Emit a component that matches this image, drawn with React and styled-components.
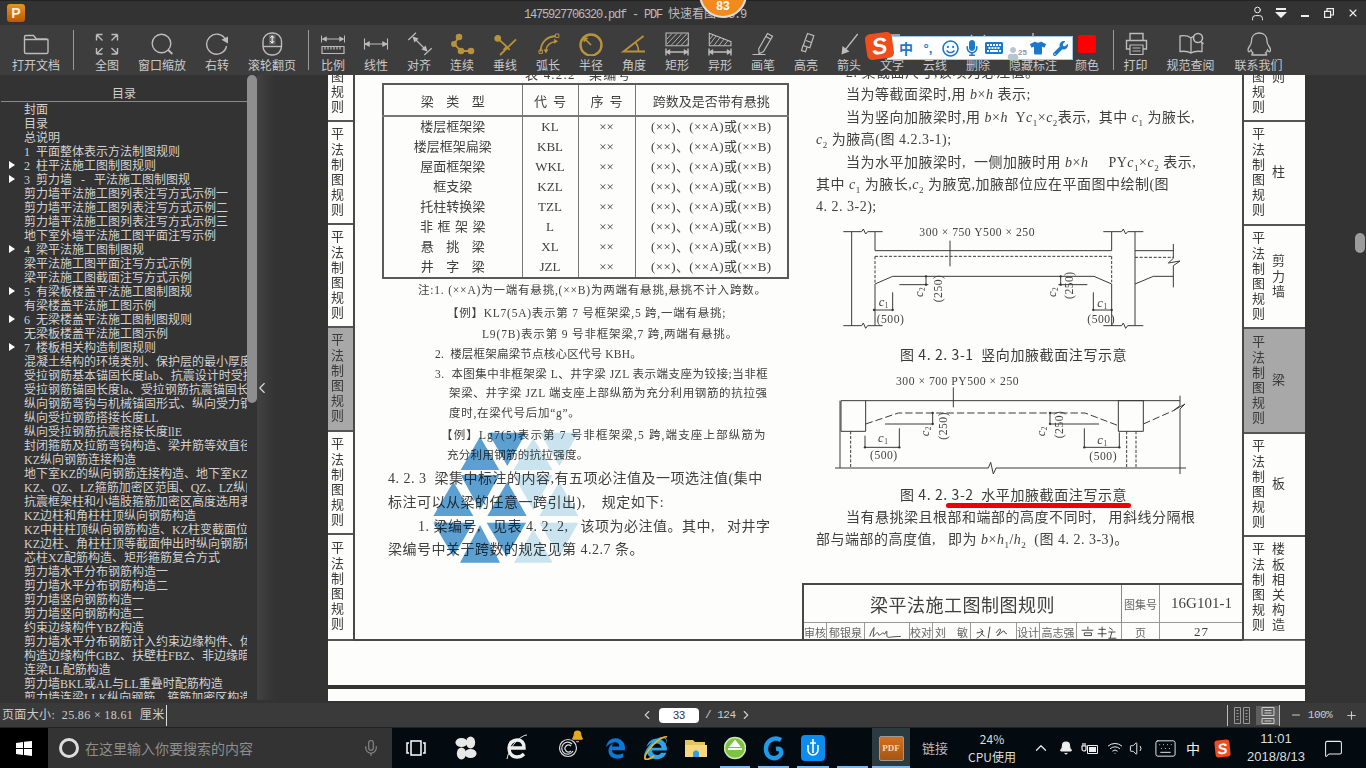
import React from 'react';
import styled, { createGlobalStyle } from 'styled-components';
import { FaEdgeLegacy, FaInternetExplorer, FaRegSmile, FaMicrophone, FaKeyboard, FaTshirt, FaWrench, FaUser } from 'react-icons/fa';
import { Bell, ChevronUp, Keyboard, Mic, MessageSquare, Volume1, Wifi, User, Minus, X, ChevronLeft, ChevronRight, Plus } from 'lucide-react';

const CJK = '"Noto Sans CJK SC", sans-serif';
const SERIF = '"Liberation Serif", "Noto Sans CJK SC", serif';

const GlobalStyle = createGlobalStyle`
  html, body { margin: 0; padding: 0; background: #333; overflow: hidden; }
  #root { width: 1366px; height: 768px; }
  * { box-sizing: border-box; }
`;

const dim = (
  <>
    <path d="M5 22h22M5 18.5v7M27 18.5v7" />
    <path d="M5.5 22l3-1.8v3.6zM26.5 22l-3-1.8v3.6z" fill="currentColor" />
  </>
);

const hatch = (
  <path strokeWidth=".9" d="M6 9l5-5.5M6 14l10-10.5M10 15.5l11-12M15 15.5l11-12M20 15.5l7-7.5M25 15.5l2-2" />
);

const icons = {
  folder: <path d="M4.5 22V7a1.5 1.5 0 0 1 1.5-1.5h7.5l3 3.5H26.5a1.5 1.5 0 0 1 1.5 1.5V22a1.5 1.5 0 0 1-1.5 1.5H6A1.5 1.5 0 0 1 4.5 22zM4.5 9.5h24" />,
  fit: <path d="M5.5 4.5h6M5.5 4.5v6M5.5 4.5l6 6M26.5 4.5h-6M26.5 4.5v6M26.5 4.5l-6 6M5.5 24h6M5.5 24v-6M5.5 24l6-6M26.5 24h-6M26.5 24v-6M26.5 24l-6-6" />,
  zoom: <><circle cx="15.5" cy="13.5" r="9.3" /><path d="M22.2 20l4.2 4" strokeWidth="1.8" /></>,
  rotate: <><path d="M24.5 9.5A10 10 0 1 0 25.5 16" /><path d="M20.5 9.8l6.5-3.3v7z" fill="currentColor" stroke="none" /></>,
  wheel: <><rect x="7" y="3" width="18.5" height="22" rx="8.5" /><path d="M7 16.5h18.5" /><path d="M13 4.5h6.5v10H13z" fill="#666" stroke="none" /><path d="M16.2 6v7M14.4 7.8l1.8-2 1.8 2M14.4 11.2l1.8 2 1.8-2" stroke="#fff" strokeWidth="1" /></>,
  ratio: <><path d="M6 9h20M4.5 5.5v7M27.5 5.5v7" strokeWidth="1" /><path d="M6 9l3-1.6v3.2zM26 9l-3-1.6v3.2z" fill="currentColor" /><path d="M5 16.5h22v7H5zM8 16.5v3M11 16.5v3M14 16.5v3M17 16.5v3M20 16.5v3M23 16.5v3" strokeWidth="1.2" /></>,
  linear: <><path d="M5 14h22M4.5 8.5v11M27.5 8.5v11" strokeWidth="1.1" /><path d="M5.5 14l3.5-1.8v3.6zM26.5 14l-3.5-1.8v3.6z" fill="currentColor" /></>,
  align: <><path d="M5.3 10L13 2.7M21.3 25l7.4-6.7M10.5 7.5l13 13" strokeWidth="1.2" /><path d="M10.5 7.5l3.8 1.2-2.6 2.6zM23.5 20.5l-3.8-1.2 2.6-2.6z" fill="currentColor" /></>,
  chain: <><path d="M13 7L8 14l7 7h10" strokeWidth="1.8" /><circle cx="13" cy="7" r="2.6" fill="currentColor" /><circle cx="8" cy="14" r="2.2" fill="currentColor" /><circle cx="15" cy="21" r="2.6" fill="currentColor" /><circle cx="25" cy="21" r="2.6" fill="currentColor" /></>,
  perp: <><path d="M8.7 8.3l9 8.4M27 9.3L11 25M14.5 20l3-3.2 3.2 3" strokeWidth="1.8" /><circle cx="8.7" cy="8.3" r="2.7" fill="currentColor" /></>,
  arc: <><path d="M8.7 21.5C8.7 12 15 6.5 24 6" strokeWidth="1.8" /><path d="M7 20h3.4v3.4H7zM23.5 4h3.4v3.4h-3.4z" strokeWidth="1" /><path d="M14 21c0-5 3.5-8.5 10-9.5" strokeWidth="1.4" /><path d="M14 23.5l-2.5-4 5-.2zM26 11.3l-4-2.5.3 5z" fill="currentColor" stroke="none" /></>,
  radius: <><circle cx="16" cy="15" r="10.5" strokeWidth="2.4" /><path d="M16 15L9 8" strokeWidth="1.7" /><path d="M7.5 6.5l6 1.4-4.6 4.6z" fill="currentColor" stroke="none" /></>,
  angle: <><path d="M25.5 6L5.5 21.5H27" strokeWidth="1.9" /><path d="M17.5 12.5c2 2.4 3 5.5 3 9" strokeWidth="1.6" /></>,
  rect: <><path d="M5 3h22.3v12.7H5z" strokeWidth="1.1" />{hatch}{dim}</>,
  shape: <><path d="M5.3 3.3L27 11.7v4H5.3z" strokeWidth="1.1" /><path strokeWidth=".9" d="M6 9l3-4M6 14l6-8M10 15.5l6-8M15 15.5l5-6.5M20 15.5l4-5" />{dim}</>,
  pen: <><path d="M20.5 3.5l5 2.8-9 15.2-4.4 2.3-.4-5z" strokeWidth="1.2" /><path d="M18.8 6.5l5 2.8M5.5 24.5h13" strokeWidth="1.2" /></>,
  marker: <><path d="M17.5 3.5l6.3 2.2-2.3 7-1.7 5-6.5-2.2 1.7-5zM16 10.500l6 2.2M13 15.500l-1.500 5 4 1.300 1.500-4.500" strokeWidth="1.2" /></>,
  arrow: <><path d="M24.7 4L12.500 19.500" strokeWidth="1.3" /><path d="M8.500 24.500l1-8.500 7 5.500z" fill="currentColor" stroke="none" /></>,
  text: <path d="M8 5h16M16 5v18" />,
  cloud: <path d="M6 20c-4-3-1-8 2-7 0-5 6-6 8-3 3-3 8-1 7 3 4 0 4 6 1 7z" />,
  trash: <path d="M9 5l14 16M23 5L9 21" />,
  hide: <path d="M16 3v4M7 9h18M10 9v12h12V9" />,
  color: <rect x="7" y="5" width="18" height="18" rx="2" fill="#ff0000" stroke="none" />,
  printer: <><path d="M10 10V3.500h13V10M10 19H6.500V10.500h20V19H23" /><path d="M10 15h13v9.500H10zM12.500 18h8M12.500 21h8" strokeWidth="1.2" /></>,
  book: <><path d="M16 23c-3-2-7-2-11-1.500V6c3-.5 8-.5 11 2 1-1 2-1.500 3-2M16 8v15c3-2 7-2 11-1.500V13" strokeWidth="1.3" /><circle cx="23" cy="8" r="4.500" strokeWidth="1.600" /><path d="M26 11.500l2.500 2.500" strokeWidth="1.600" /></>,
  qq: <path d="M16 3c-5 0-7.500 3.500-7.500 8 0 2-.5 3-1.500 4.500-1.500 2-2.500 4.500-1.500 6 .7.700 1.700-.3 2.500-1.500.5 1.500 1.200 2.500 2 3-1 .5-1.500 1.500-1 2h14.500c.5-.5 0-1.500-1-2 .8-.5 1.500-1.500 2-3 .8 1.200 1.800 2.200 2.500 1.500 1-1.500 0-4-1.500-6-1-1.500-1.500-2.500-1.500-4.500 0-4.500-2.500-8-7.500-8z" strokeWidth="1.300" />,
};

const tools = [
  { label: '打开文档', w: 60, icon: 'folder' },
  { sep: true, ml: 7, mr: 5.5 },
  { label: '全图', w: 55, icon: 'fit' },
  { label: '窗口缩放', w: 55, icon: 'zoom' },
  { label: '右转', w: 55, icon: 'rotate' },
  { label: '滚轮翻页', w: 55, icon: 'wheel' },
  { sep: true, ml: 8.5, mr: 2.5 },
  { label: '比例', w: 43, icon: 'ratio' },
  { label: '线性', w: 43, icon: 'linear' },
  { label: '对齐', w: 43, icon: 'align' },
  { label: '连续', w: 43, icon: 'chain', gold: true },
  { label: '垂线', w: 43, icon: 'perp', gold: true },
  { label: '弧长', w: 43, icon: 'arc', gold: true },
  { label: '半径', w: 43, icon: 'radius', gold: true },
  { label: '角度', w: 43, icon: 'angle', gold: true },
  { label: '矩形', w: 43, icon: 'rect' },
  { label: '异形', w: 43, icon: 'shape' },
  { label: '画笔', w: 43, icon: 'pen' },
  { label: '高亮', w: 43, icon: 'marker' },
  { label: '箭头', w: 43, icon: 'arrow' },
  { label: '文字', w: 43, icon: 'text' },
  { label: '云线', w: 43, icon: 'cloud' },
  { label: '删除', w: 43, icon: 'trash' },
  { label: '隐藏标注', w: 67, icon: 'hide' },
  { label: '颜色', w: 41, icon: 'color' },
  { sep: true, ml: 5, mr: 0 },
  { label: '打印', w: 44, icon: 'printer' },
  { label: '规范查阅', w: 66, icon: 'book' },
  { label: '联系我们', w: 70, icon: 'qq' },
];

const tocItems = [
  ['封面'], ['目录'], ['总说明'], ['1  平面整体表示方法制图规则'],
  ['2  柱平法施工图制图规则', true], ['3  剪力墙   -   平法施工图制图规', true],
  ['剪力墙平法施工图列表注写方式示例一'], ['剪力墙平法施工图列表注写方式示例二'], ['剪力墙平法施工图列表注写方式示例三'],
  ['地下室外墙平法施工图平面注写示例'], ['4  梁平法施工图制图规', true],
  ['梁平法施工图平面注写方式示例'], ['梁平法施工图截面注写方式示例'],
  ['5  有梁板楼盖平法施工图制图规', true], ['有梁楼盖平法施工图示例'],
  ['6  无梁楼盖平法施工图制图规则', true], ['无梁板楼盖平法施工图示例'],
  ['7  楼板相关构造制图规则', true],
  ['混凝土结构的环境类别、保护层的最小厚度'], ['受拉钢筋基本锚固长度lab、抗震设计时受拉钢筋'],
  ['受拉钢筋锚固长度la、受拉钢筋抗震锚固长度'], ['纵向钢筋弯钩与机械锚固形式、纵向受力钢筋'],
  ['纵向受拉钢筋搭接长度LL'], ['纵向受拉钢筋抗震搭接长度llE'],
  ['封闭箍筋及拉筋弯钩构造、梁并筋等效直径'], ['KZ纵向钢筋连接构造'],
  ['地下室KZ的纵向钢筋连接构造、地下室KZ的'], ['KZ、QZ、LZ箍筋加密区范围、QZ、LZ纵向钢筋'],
  ['抗震框架柱和小墙肢箍筋加密区高度选用表'], ['KZ边柱和角柱柱顶纵向钢筋构造'],
  ['KZ中柱柱顶纵向钢筋构造、KZ柱变截面位置'], ['KZ边柱、角柱柱顶等截面伸出时纵向钢筋构造'],
  ['芯柱XZ配筋构造、矩形箍筋复合方式'], ['剪力墙水平分布钢筋构造一'], ['剪力墙水平分布钢筋构造二'],
  ['剪力墙竖向钢筋构造一'], ['剪力墙竖向钢筋构造二'], ['约束边缘构件YBZ构造'],
  ['剪力墙水平分布钢筋计入约束边缘构件、体积'], ['构造边缘构件GBZ、扶壁柱FBZ、非边缘暗柱'],
  ['连梁LL配筋构造'], ['剪力墙BKL或AL与LL重叠时配筋构造'], ['剪力墙连梁LLK纵向钢筋、箍筋加密区构造'],
];

const beams = [
  ['楼层框架梁', 0, 'KL'], ['楼层框架扁梁', 0, 'KBL'], ['屋面框架梁', 0, 'WKL'], ['框支梁', 0, 'KZL'],
  ['托柱转换梁', 0, 'TZL'], ['非框架梁', 4.5, 'L'], ['悬挑梁', 12.5, 'XL'], ['井字梁', 12.5, 'JZL'],
];

const notes = [
  { t: '注:1. (××A)为一端有悬挑,(××B)为两端有悬挑,悬挑不计入跨数。', x: 63, gap: 1, ls: 0.8 },
  { t: '【例】KL7(5A)表示第 7 号框架梁,5 跨,一端有悬挑;', x: 92, gap: 3, ls: 0.75 },
  { t: 'L9(7B)表示第 9 号非框架梁,7 跨,两端有悬挑。', x: 127, gap: 1, ls: 0.85 },
  { t: '2.  楼层框架扁梁节点核心区代号 KBH。', x: 80, gap: 0, ls: 0.2 },
  { t: '3.  本图集中非框架梁 L、井字梁 JZL 表示端支座为铰接;当非框', x: 80, gap: 0, ls: 0.5 },
  { t: '架梁、井字梁 JZL 端支座上部纵筋为充分利用钢筋的抗拉强', x: 94, gap: -1, ls: 0.65 },
  { t: '度时,在梁代号后加“g”。', x: 94, gap: 0, ls: 0.7 },
  { t: '【例】Lg7(5)表示第 7 号非框架梁,5 跨,端支座上部纵筋为', x: 86, gap: 2, ls: 1.15 },
  { t: '充分利用钢筋的抗拉强度。', x: 92, gap: 0, ls: 0.3 },
];

const leftTabs = [{ h: 103 }, { h: 103 }, { h: 103 }, { h: 104, on: true }, { h: 103 }, { h: 106 }];
const rightTabs = [
  { h: 103, side: '总则' }, { h: 104, side: '柱' }, { h: 103, side: '剪力墙' },
  { h: 105, side: '梁', on: true }, { h: 103, side: '板' }, { h: 104, side: '楼板相关构造' },
];

const taskIcons = [
  { w: 48, node: <svg width="20" height="18" viewBox="0 0 20 18" fill="none" stroke="#fff" strokeWidth="1.500"><path d="M5 2h10v14H5zM3 4H1v10h2M17 4h2v10h-2" /></svg> },
  { w: 52, node: <svg width="22" height="24" viewBox="0 0 24 26" fill="#e8e8e8"><ellipse cx="7" cy="7" rx="6.500" ry="5" /><ellipse cx="17" cy="7" rx="5" ry="6.500" /><ellipse cx="7" cy="19" rx="5" ry="6.500" /><ellipse cx="17" cy="19" rx="6.500" ry="5" /><circle cx="12" cy="13" r="1.500" fill="#05101a" /></svg> },
  { w: 50, node: <svg width="24" height="28" viewBox="0 0 24 28" fill="none" stroke="#eee"><path d="M4 14h15c0-6-3-8-7-8s-8 3-8 8 3 9 8 9c3 0 5-1 7-3" strokeWidth="3.400" /><path d="M22 1C17 1 5 10 2 25" strokeWidth="1" /></svg> },
  { w: 52, node: <GSwirl /> },
  { w: 42, node: <FaEdgeLegacy size={21} color="#0a78d4" /> },
  { w: 39, node: <IeIcon /> },
  { w: 41, node: <FolderIcon /> },
  { w: 38, line: true, node: <svg width="22" height="26" viewBox="0 0 22 26"><circle cx="11" cy="13" r="10.500" fill="#7dc242" stroke="#cfe8b8" strokeWidth="1.500" /><path d="M4 14h14M11 6l-4 5h8z" stroke="#fff" strokeWidth="1.800" fill="#fff" /></svg> },
  { w: 39, line: true, node: <svg width="24" height="26" viewBox="0 0 24 26" fill="none"><path d="M19 5C12 1 4 6 4 14s7 11 12 8 4-9-2-8" stroke="#1e9be8" strokeWidth="4.500" /></svg> },
  { w: 40, line: true, node: <svg width="24" height="26" viewBox="0 0 24 26" fill="none"><rect width="24" height="26" rx="4" fill="#0d8cf0" /><path d="M12 4v14M7 10v5a5 5 0 0 0 10 0v-5M9 8h6" stroke="#fff" strokeWidth="1.600" /></svg> },
  { w: 39, line: true, node: null },
];

function GSwirl() {
  return (
    <BellWrap>
      <svg width="20" height="20" viewBox="0 0 20 20" fill="none" stroke="#ddd" strokeWidth="1.200"><circle cx="10" cy="10" r="8.500" /><path d="M14 6a6 6 0 1 0 1 7M13 8a3.500 3.500 0 1 0 0 5" /></svg>
      <BellBadge><Bell size={13} color="#e8a81c" fill="#e8a81c" /></BellBadge>
    </BellWrap>
  );
}

function IeIcon() {
  return (
    <BellWrap>
      <FaInternetExplorer size={23} color="#2ea3e8" />
      <BellBadge $ring><svg width="24" height="24" viewBox="0 0 24 24" fill="none" stroke="#f2b21c" strokeWidth="1.600"><path d="M23 1c-2-1-9 2-15 9S0 21 1 23c1 1 5 0 9-3" /></svg></BellBadge>
    </BellWrap>
  );
}

function FolderIcon() {
  return (
    <svg width="22" height="20" viewBox="0 0 22 20"><path d="M0 2h8l2 2h10v15H0z" fill="#e8c25e" /><path d="M0 7h22v12H0z" fill="#f6d97e" /><path d="M8 19v-5l3-2 3 2v5z" fill="#3a9be0" /></svg>
  );
}

const CSub = ({ x, y, n }) => (
  <DiagramText x={x} y={y}>
    <tspan fontStyle="italic" fontSize="38">c</tspan>
    <tspan fontSize="22" dy="6">{n}</tspan>
  </DiagramText>
);

const CRot = ({ x, y, n }) => (
  <DiagramText transform={`translate(${x} ${y}) rotate(-90)`}>
    <tspan fontStyle="italic" fontSize="38">c</tspan>
    <tspan fontSize="22" dy="6">{n}</tspan>
  </DiagramText>
);

const App = () => (
  <>
    <GlobalStyle />
    <Shell>
      <TitleBar>
        <AppLogo>P</AppLogo>
        <DocTitle>1475927706320.pdf - PDF <Wide>快速看图</Wide> V3.9</DocTitle>
        <Badge>83</Badge>
        <WindowControls>
          <WinBtn $w={24}><User size={17} strokeWidth={1.400} /></WinBtn>
          <WinBtn $w={24}>
            <svg width="12" height="11" viewBox="0 0 12 11" fill="#eee"><path d="M1 0h10v2H1zM0 4h12l-6 6z" /></svg>
          </WinBtn>
          <WinBtn $w={24}><svg width="8" height="8" viewBox="0 0 8 8" fill="#eee"><path d="M0 6h8v2H0z" /></svg></WinBtn>
          <WinBtn $w={24}><svg width="10" height="10" viewBox="0 0 10 10" fill="none" stroke="#eee" strokeWidth="1.200"><path d="M.6 3.400h6v6h-6zM3 3V.6h6.400V7H7" /></svg></WinBtn>
          <WinBtn $w={24}><X size={12} strokeWidth={2.200} /></WinBtn>
        </WindowControls>
      </TitleBar>

      <Toolbar>
        {tools.map((tool, i) =>
          tool.sep ? (
            <ToolSep key={i} $ml={tool.ml} $mr={tool.mr} />
          ) : (
            <Tool key={tool.label} $w={tool.w}>
              <ToolIcon viewBox="0 0 32 26" $gold={tool.gold}>{icons[tool.icon]}</ToolIcon>
              <ToolLabel>{tool.label}</ToolLabel>
            </Tool>
          )
        )}
        <SogouLogo>S</SogouLogo>
        <SogouBar>
          <SogouSlot><SogouZh>中</SogouZh></SogouSlot>
          <SogouSlot><SogouDots>°,</SogouDots></SogouSlot>
          <SogouSlot><FaRegSmile size={17} /></SogouSlot>
          <SogouSlot><FaMicrophone size={16} /></SogouSlot>
          <SogouSlot><FaKeyboard size={18} /></SogouSlot>
          <SogouSlot><SogouSkin><FaUser size={12} /><SkinNum>25</SkinNum></SogouSkin></SogouSlot>
          <SogouSlot><FaTshirt size={16} /></SogouSlot>
          <SogouSlot><FaWrench size={15} /></SogouSlot>
        </SogouBar>
      </Toolbar>

      <Viewer>
        <Sidebar>
          <TocPane>
            <TocHead>目录</TocHead>
            <TocList>
              {tocItems.map(([text, caret]) => (
                <TocRow key={text} $caret={caret}>{text}</TocRow>
              ))}
            </TocList>
          </TocPane>
          <TocScroll><TocThumb /></TocScroll>
        </Sidebar>
        <Splitter><ChevronLeft size={18} color="#ddd" strokeWidth={1.500} /></Splitter>

        <DocArea>
          <Sheet>
            <TabsLeft>
              {leftTabs.map((tab, i) => (
                <TabL key={i} $h={tab.h} $on={tab.on}><TabText>平法制图规则</TabText></TabL>
              ))}
            </TabsLeft>

            <SheetMain>
              <LeftCol>
                <TableTitle>表 4.2.2   梁编号</TableTitle>
                <BeamTable>
                  <thead>
                    <tr>
                      <HeadCell $w={139} $sp={12.500}>梁类型</HeadCell>
                      <HeadCell $w={56} $sp={6}>代号</HeadCell>
                      <HeadCell $w={57} $sp={6}>序号</HeadCell>
                      <HeadCell $w={153}>跨数及是否带有悬挑</HeadCell>
                    </tr>
                  </thead>
                  <tbody>
                    {beams.map(([name, sp, code]) => (
                      <tr key={code}>
                        <Cell $sp={sp}>{name}</Cell>
                        <Cell>{code}</Cell>
                        <Cell>××</Cell>
                        <Cell $sp={0.4} $flat>(××)、(××A)或(××B)</Cell>
                      </tr>
                    ))}
                  </tbody>
                </BeamTable>
                {notes.map(note => (
                  <NoteLine key={note.t} $x={note.x} $gap={note.gap} $ls={note.ls}>{note.t}</NoteLine>
                ))}
                <BodyLine $x={33} $top={2}>4. 2. 3  梁集中标注的内容,有五项必注值及一项选注值(集中</BodyLine>
                <BodyLine $x={33} $top={1}>标注可以从梁的任意一跨引出),    规定如下:</BodyLine>
                <BodyLine $x={63} $top={1}>1. 梁编号,   见表 4. 2. 2,   该项为必注值。其中,   对井字</BodyLine>
                <BodyLine $x={33} $top={0}>梁编号中关于跨数的规定见第 4.2.7 条。</BodyLine>
                <Watermark viewBox="0 0 1260 600">
                  <g fill="#2f86c9" fillOpacity=".78">
                    <path d="M330 80L272 180H388zM355 68H468L412 168zM272 195H388L330 300zM250 215L190 318H310zM412 215L352 318H470zM190 338H310L250 440zM350 338H468L410 440zM330 345L270 458H390z" />
                  </g>
                  <g fill="#a9d5ea" fillOpacity=".6">
                    <path d="M490 85L430 180H548zM510 68H625L568 168zM430 195H548L490 300zM568 215L508 318H625zM508 338H625L568 440zM490 358L432 458H548z" />
                  </g>
                </Watermark>
              </LeftCol>

              <RightCol>
                <TextLine $x={46} $first>2. 梁截面尺寸,该项为必注值。</TextLine>
                <TextLine $x={46}>当为等截面梁时,用 <Var>b</Var>×<Var>h</Var> 表示;</TextLine>
                <TextLine $x={46}>当为竖向加腋梁时,用 <Var>b</Var>×<Var>h</Var>  Y<Var>c</Var><sub>1</sub>×<Var>c</Var><sub>2</sub>表示,  其中 <Var>c</Var><sub>1</sub> 为腋长,</TextLine>
                <TextLine $x={16}><Var>c</Var><sub>2</sub> 为腋高(图 4.2.3-1);</TextLine>
                <TextLine $x={46}>当为水平加腋梁时,  一侧加腋时用 <Var>b</Var>×<Var>h</Var>     PY<Var>c</Var><sub>1</sub>×<Var>c</Var><sub>2</sub> 表示,</TextLine>
                <TextLine $x={16}>其中 <Var>c</Var><sub>1</sub> 为腋长,<Var>c</Var><sub>2</sub> 为腋宽,加腋部位应在平面图中绘制(图</TextLine>
                <TextLine $x={16}>4. 2. 3-2);</TextLine>

                <Diagram width="400" height="125" viewBox="0 0 1200 375">
                  <path d="M130 38H185L190 30L197 45L203 38H248M130 320H185L190 312L197 328L203 320H248M155 38V320M225 38V95M225 195V320M225 95H935M910 38H965L970 30L977 45L983 38H1030M910 320H965L970 312L977 328L983 320H1030M935 38V95M1005 38V320M935 195V320M225 195L278 172H882L935 195M450 65V142M1005 95H1120M1005 195L1060 172H1120M1120 75V118L1105 132L1140 126L1120 140V205M298 197H385M378 172V197M775 197H862M782 172V197M222 273H278M278 220V273M880 273H935M880 220V273" />
                  <path strokeDasharray="9 5" d="M225 112H935M225 112V195M935 112V190M1005 115H1120" />
                  <g fill="#333" stroke="none">
                    <circle cx="378" cy="172" r="3.500" /><circle cx="378" cy="197" r="3.500" /><circle cx="782" cy="172" r="3.500" /><circle cx="782" cy="197" r="3.500" />
                    <circle cx="222" cy="273" r="3.500" /><circle cx="278" cy="273" r="3.500" /><circle cx="880" cy="273" r="3.500" /><circle cx="935" cy="273" r="3.500" />
                  </g>
                  <DiagramText x="358" y="50">300 × 750  Y500 × 250</DiagramText>
                  <CSub x={236} y={262} n="1" />
                  <DiagramText x="230" y="312">(500)</DiagramText>
                  <CSub x={892} y={264} n="1" />
                  <DiagramText x="862" y="312">(500)</DiagramText>
                  <CRot x={368} y={234} n="2" />
                  <DiagramText transform="translate(426 250) rotate(-90)">(250)</DiagramText>
                  <CRot x={768} y={234} n="2" />
                  <DiagramText transform="translate(818 240) rotate(-90)">(250)</DiagramText>
                </Diagram>
                <Caption>图 4. 2. 3-1  竖向加腋截面注写示意</Caption>
                <Diagram $top={5} width="400" height="115" viewBox="0 450 1200 345">
                  <path d="M123 545H1140M123 545V637H197V545M955 545V637H1030V545M955 545H1030M120 545V747M1140 530V560L1120 575L1155 555L1140 570V765M460 505V565M255 615H400M398 582V615M750 582V615M750 615H897M195 685H298M195 650V685M298 628V685M853 685H958M853 628V685M958 640V685M105 747H565L572 730L580 765L588 747H1158" />
                  <path strokeDasharray="22 9" d="M197 615L295 582H855L955 620M1030 615L1120 575" />
                  <path strokeDasharray="9 5" d="M152 637V747M980 637V747M1008 637V747" />
                  <g fill="#333" stroke="none">
                    <circle cx="398" cy="582" r="3.500" /><circle cx="398" cy="615" r="3.500" /><circle cx="750" cy="582" r="3.500" /><circle cx="750" cy="615" r="3.500" />
                    <circle cx="195" cy="685" r="3.500" /><circle cx="298" cy="685" r="3.500" /><circle cx="853" cy="685" r="3.500" /><circle cx="958" cy="685" r="3.500" />
                  </g>
                  <DiagramText x="288" y="498">300 × 700  PY500 × 250</DiagramText>
                  <CSub x={234} y={670} n="1" />
                  <DiagramText x="210" y="720">(500)</DiagramText>
                  <CSub x={892} y={674} n="1" />
                  <DiagramText x="868" y="722">(500)</DiagramText>
                  <CRot x={386} y={652} n="2" />
                  <DiagramText transform="translate(440 662) rotate(-90)">(250)</DiagramText>
                  <CRot x={736} y={652} n="2" />
                  <DiagramText transform="translate(790 658) rotate(-90)">(250)</DiagramText>
                </Diagram>
                <Caption $mark>图 4. 2. 3-2  水平加腋截面注写示意<RedMark /></Caption>
                <TextLine $x={46} $top={1}>当有悬挑梁且根部和端部的高度不同时,   用斜线分隔根</TextLine>
                <TextLine $x={16}>部与端部的高度值,   即为 <Var>b</Var>×<Var>h</Var><sub>1</sub>/<Var>h</Var><sub>2</sub>  (图 4. 2. 3-3)。</TextLine>

                <TitleBlock>
                  <TitleMain>梁平法施工图制图规则</TitleMain>
                  <TitleCell $small $row>图集号</TitleCell>
                  <TitleCell $big>16G101-1</TitleCell>
                  <TitleCell $small>审核</TitleCell>
                  <TitleCell $small>郁银泉</TitleCell>
                  <TitleCell><Signature viewBox="0 0 45 18"><path d="M3 14c3-8 5-10 5-10s-1 8-1 10 3-5 5-4 0 4 3 2 3-3 4-1 2-3 3-3-1 7 2 7 6-1 14-1" /></Signature></TitleCell>
                  <TitleCell $small>校对</TitleCell>
                  <TitleCell $small>刘    敏</TitleCell>
                  <TitleCell><Signature viewBox="0 0 46 18"><path d="M8 5l3 3M4 10c4 0 6-2 7-2-1 4-4 7-7 8M9 10l4 4M19 3l-2 13M26 10c2-3 4-5 5-4 0 3-3 6-4 7 3-1 5-4 7-5s1 3 4 3" /></Signature></TitleCell>
                  <TitleCell $small>设计</TitleCell>
                  <TitleCell $small>高志强</TitleCell>
                  <TitleCell><Signature viewBox="0 0 45 18"><path d="M3 7h13M10 3v3M6 10h8v3H6zM22 6h8M26 3v12M21 11h10M34 4l4 3M33 9h8M37 9l-2 7M33 16h9" /></Signature></TitleCell>
                  <TitleCell $small>页</TitleCell>
                  <TitleCell $num>27</TitleCell>
                </TitleBlock>
              </RightCol>
            </SheetMain>

            <TabsRight>
              {rightTabs.map((tab, i) => (
                <TabR key={i} $h={tab.h} $on={tab.on}>
                  <TabText>平法制图规则</TabText>
                  <TabText>{tab.side}</TabText>
                </TabR>
              ))}
            </TabsRight>
          </Sheet>
          <NextSheet />
        </DocArea>

        <DocScroll><DocThumb /></DocScroll>
      </Viewer>

      <StatusBar>
        <PageSize>页面大小:  25.86 × 18.61  厘米</PageSize>
        <Pager>
          <ChevronLeft size={14} strokeWidth={2} />
          <PageInput>33</PageInput>
          <PageTotal>/ 124</PageTotal>
          <ChevronRight size={14} strokeWidth={2} />
        </Pager>
        <ViewModes>
          <ViewBtn>
            <svg width="16" height="17" viewBox="0 0 16 17" fill="none" stroke="#999"><path d="M.5.5h6v16h-6zM9.500.5h6v16h-6zM2.500 3.500h2M2.500 6.500h2M2.500 9.500h2M2.500 12.500h2M11.500 3.500h2M11.500 6.500h2M11.500 9.500h2M11.500 12.500h2" /></svg>
          </ViewBtn>
          <ViewBtn $on>
            <svg width="16" height="17" viewBox="0 0 16 17" fill="none" stroke="#ccc"><path d="M2 .5h12v8H2zM2 11.500h12v5H2zM4.500 3.500h7M4.500 6h7M4.500 14h7" /></svg>
          </ViewBtn>
        </ViewModes>
        <ZoomBox>
          <Minus size={12} />
          <ZoomValue>100%</ZoomValue>
          <Plus size={13} />
        </ZoomBox>
      </StatusBar>

      <Taskbar>
        <StartBtn>
          <svg width="16" height="15" viewBox="0 0 16 15" fill="#fff"><path d="M0 2l7-1v6H0zM8 .8L16 0v7H8zM0 8h7v6l-7-1zM8 8h8v7l-8-1z" /></svg>
        </StartBtn>
        <SearchBox>
          <CortanaRing />
          <SearchText>在这里输入你要搜索的内容</SearchText>
          <Mic size={18} color="#8a8a8a" strokeWidth={1.500} />
        </SearchBox>
        {taskIcons.map((item, i) => (
          <TaskBtn key={i} $w={item.w} $line={item.line}>{item.node}</TaskBtn>
        ))}
        <TaskBtn $w={38} $line $active>
          <PdfTile>PDF</PdfTile>
        </TaskBtn>
        <TrayLink>链接</TrayLink>
        <CpuBox>
          <span>24%</span>
          <span>CPU使用</span>
        </CpuBox>
        <TrayItem $w={34}><ChevronUp size={18} strokeWidth={1.600} /></TrayItem>
        <TrayItem $w={16}><Bell size={14} fill="#eee" /></TrayItem>
        <TrayItem $w={32}>
          <svg width="18" height="14" viewBox="0 0 18 14" fill="none" stroke="#eee"><path d="M6.500 4.500h10v8h-10z" /><path d="M8 6h7v5H8z" fill="#eee" stroke="none" /><path d="M1 5h4v3a2 2 0 0 1-4 0zM2 2v3M4 2v3" strokeWidth="1.200" /></svg>
        </TrayItem>
        <TrayItem $w={18}><Wifi size={16} strokeWidth={1.500} /></TrayItem>
        <TrayItem $w={26}><Volume1 size={17} strokeWidth={1.400} /></TrayItem>
        <TrayItem $w={30}><Keyboard size={23} strokeWidth={1} /></TrayItem>
        <TrayItem $w={26}>中</TrayItem>
        <TrayItem $w={32}><TraySogou>S</TraySogou></TrayItem>
        <ClockBox>
          <span>11:01</span>
          <span>2018/8/13</span>
        </ClockBox>
        <TrayItem $w={38}><MessageSquare size={19} strokeWidth={1.300} /></TrayItem>
      </Taskbar>
    </Shell>
  </>
);

export default App;

const Shell = styled.div`
  width: 1366px;
  height: 768px;
  display: flex;
  flex-direction: column;
  overflow: hidden;
  background: #333;
  font-family: ${CJK};
`;

const TitleBar = styled.div`
  position: relative;
  height: 25px;
  flex: none;
  display: flex;
  align-items: center;
  background: #333;
  border-top: 1px solid #222;
`;

const AppLogo = styled.div`
  width: 18px;
  height: 18px;
  margin-left: 7px;
  border-radius: 3px;
  background: linear-gradient(#e8902a, #b85a08);
  color: #fff0dc;
  font: bold 14px/18px "Liberation Sans", sans-serif;
  text-align: center;
`;

const DocTitle = styled.div`
  margin-left: 499px;
  color: #bbb;
  font: 12px "Liberation Mono", "Noto Sans CJK SC", monospace;
  letter-spacing: -1.2px;
  white-space: pre;
`;

const Wide = styled.span`
  letter-spacing: 0;
  font-family: ${CJK};
`;

const Badge = styled.div`
  position: absolute;
  left: 699px;
  top: -31px;
  width: 48px;
  height: 48px;
  padding-bottom: 3px;
  border-radius: 50%;
  border: 2px solid #ddd;
  background: #f28a1c;
  color: #fff;
  font: bold 12px "Liberation Sans", sans-serif;
  display: flex;
  align-items: flex-end;
  justify-content: center;
`;

const WindowControls = styled.div`
  margin-left: auto;
  display: flex;
  padding-right: 1px;
`;

const WinBtn = styled.div`
  width: ${p => p.$w}px;
  display: flex;
  align-items: center;
  justify-content: center;
  color: #eee;
`;

const Toolbar = styled.div`
  position: relative;
  height: 50px;
  flex: none;
  display: flex;
  padding-left: 6px;
  background: #3d3d3d;
`;

const Tool = styled.div`
  width: ${p => p.$w}px;
  flex: none;
  display: flex;
  flex-direction: column;
  align-items: center;
  padding-top: 5px;
`;

const ToolIcon = styled.svg`
  width: 32px;
  height: 26px;
  flex: none;
  fill: none;
  stroke: currentColor;
  stroke-width: 1.4;
  color: ${p => (p.$gold ? '#b8933c' : '#bcbcbc')};
`;

const ToolLabel = styled.div`
  margin-top: 1px;
  color: #cacaca;
  font-size: 12px;
  line-height: 16px;
  white-space: nowrap;
`;

const ToolSep = styled.div`
  width: 1px;
  flex: none;
  height: 40px;
  margin: 5px ${p => p.$mr}px 0 ${p => p.$ml}px;
  background: #9a9a9a;
`;

const SogouLogo = styled.div`
  position: absolute;
  left: 866px;
  top: 8px;
  z-index: 2;
  width: 27px;
  height: 26px;
  border-radius: 5px;
  transform: rotate(-8deg);
  background: #ee4d1c;
  color: #fff;
  font: italic bold 23px/26px "Liberation Sans", sans-serif;
  text-align: center;
`;

const SogouBar = styled.div`
  position: absolute;
  left: 887px;
  top: 11px;
  width: 186px;
  height: 24px;
  padding-left: 7px;
  display: flex;
  align-items: center;
  background: #fff;
  border: 1px solid #a9c9e2;
  color: #1b79c9;
`;

const SogouSlot = styled.div`
  width: 22px;
  flex: none;
  display: flex;
  align-items: center;
  justify-content: center;
`;

const SogouZh = styled.span`
  font-size: 14px;
  font-weight: 700;
`;

const SogouDots = styled.span`
  font: bold 13px "Liberation Sans", sans-serif;
`;

const SogouSkin = styled.span`
  position: relative;
  width: 18px;
  height: 16px;
  color: #b8c4cf;
`;

const SkinNum = styled.span`
  position: absolute;
  right: -2px;
  bottom: -1px;
  font: bold 8px "Liberation Sans", sans-serif;
  color: #8c98a3;
`;

const Viewer = styled.div`
  height: 628px;
  flex: none;
  display: flex;
  overflow: hidden;
`;

const Sidebar = styled.div`
  width: 257px;
  flex: none;
  height: 625px;
  display: flex;
`;

const TocPane = styled.div`
  width: 247px;
  overflow: hidden;
  padding-left: 1px;
`;

const TocHead = styled.div`
  height: 27px;
  padding-top: 9px;
  border-bottom: 1px solid #8a8a8a;
  color: #d0d0d0;
  font-size: 12px;
  line-height: 17px;
  text-align: center;
`;

const TocList = styled.div`
  height: 597px;
  overflow: hidden;
  padding-top: 1px;
`;

const TocRow = styled.div`
  position: relative;
  height: 14px;
  padding-left: 23px;
  color: #d2d2d2;
  font: 12px/14px ${SERIF};
  white-space: pre;

  &::before {
    content: ${p => (p.$caret ? "''" : 'none')};
    position: absolute;
    left: 8px;
    top: 2px;
    border-left: 6px solid #fff;
    border-top: 4.5px solid transparent;
    border-bottom: 4.5px solid transparent;
  }
`;

const TocScroll = styled.div`
  width: 10px;
`;

const TocThumb = styled.div`
  height: 328px;
  border-radius: 5px;
  background: #8e8e8e;
`;

const Splitter = styled.div`
  width: 71px;
  flex: none;
  display: flex;
  align-items: center;
  background: linear-gradient(90deg, #424242, #333 18px);
  height: 625px;

  svg { margin-left: -4px; }
`;

const DocArea = styled.div`
  width: 977px;
  flex: none;
  display: flex;
  flex-direction: column;
  gap: 4px;
`;

const Sheet = styled.div`
  height: 610px;
  flex: none;
  display: flex;
  align-items: flex-start;
  overflow: hidden;
  background: #fdfdfc;
  filter: blur(0.35px);
`;

const NextSheet = styled.div`
  height: 12px;
  flex: none;
  background: #fdfdfc;
`;

const TabsLeft = styled.div`
  width: 27px;
  flex: none;
  height: 566px;
  overflow: hidden;
  border-right: 2px solid #484848;
`;

const TabsRight = styled.div`
  width: 63px;
  flex: none;
  height: 566px;
  overflow: hidden;
  border-left: 2px solid #484848;
  border-bottom: 1px solid #777;
`;

const TabL = styled.div`
  height: ${p => p.$h}px;
  border-bottom: 2px solid #555;
  display: flex;
  align-items: center;
  padding-left: 2px;
  background: ${p => (p.$on ? '#a8a8a8' : 'transparent')};

  &:first-child { margin-top: -56px; }
`;

const TabR = styled(TabL)`
  padding-left: 7px;
  gap: 6px;
`;

const TabText = styled.div`
  writing-mode: vertical-rl;
  text-orientation: upright;
  width: 14px;
  color: #3a3a3a;
  font-size: 13px;
  line-height: 14px;
  letter-spacing: 2.2px;
`;

const SheetMain = styled.div`
  width: 887px;
  height: 566px;
  flex: none;
  display: flex;
  overflow: hidden;
  border-bottom: 2px solid #484848;
  color: #404040;
  font-family: ${SERIF};
`;

const LeftCol = styled.div`
  position: relative;
  width: 445px;
  flex: none;
`;

const TableTitle = styled.div`
  height: 16px;
  margin-top: -8px;
  padding-left: 170px;
  font-size: 13px;
  line-height: 16px;
  letter-spacing: 1.2px;
  white-space: pre;
`;

const BeamTable = styled.table`
  width: 405px;
  margin-left: 27px;
  border-collapse: collapse;
  table-layout: fixed;
  border: 2px solid #5a5a5a;
`;

const HeadCell = styled.th`
  width: ${p => p.$w}px;
  height: 32px;
  padding: 0 0 0 ${p => p.$sp || 0}px;
  border: 1px solid #777;
  border-bottom-width: 2px;
  font-size: 13px;
  font-weight: 400;
  letter-spacing: ${p => p.$sp || 0}px;
`;

const Cell = styled.td`
  height: 20px;
  padding: 0 0 0 ${p => (p.$flat ? 0 : p.$sp || 0)}px;
  border-left: 1px solid #777;
  border-right: 1px solid #777;
  font-size: 13px;
  line-height: 20px;
  text-align: center;
  white-space: nowrap;
  letter-spacing: ${p => p.$sp || 0}px;
`;

const NoteLine = styled.div`
  height: 20px;
  margin-top: ${p => p.$gap}px;
  padding-left: ${p => p.$x}px;
  font-size: 11.5px;
  line-height: 20px;
  white-space: pre;
  letter-spacing: ${p => p.$ls}px;
`;

const BodyLine = styled.div`
  height: 23px;
  margin-top: ${p => p.$top}px;
  padding-left: ${p => p.$x}px;
  font-size: 14px;
  line-height: 23px;
  letter-spacing: .5px;
  white-space: pre;
`;

const Watermark = styled.svg`
  position: absolute;
  left: 15px;
  top: 335px;
  width: 420px;
  height: 200px;
  mix-blend-mode: multiply;
  pointer-events: none;
`;

const RightCol = styled.div`
  width: 442px;
  flex: none;
  display: flex;
  flex-direction: column;
`;

const TextLine = styled.div`
  height: 22.4px;
  margin-top: ${p => (p.$first ? -13 : p.$top || 0)}px;
  padding-left: ${p => p.$x}px;
  font-size: 14px;
  line-height: 22.4px;
  letter-spacing: .5px;
  white-space: pre;

  sub {
    font-size: 9px;
    line-height: 0;
  }
`;

const Var = styled.i`
  font-style: italic;
`;

const Diagram = styled.svg`
  flex: none;
  display: block;
  margin-top: ${p => p.$top || 0}px;
  fill: none;
  stroke: #3a3a3a;
  stroke-width: 3;
`;

const DiagramText = styled.text`
  fill: #444;
  stroke: none;
  font-family: "Liberation Serif", serif;
  font-size: 35px;
  letter-spacing: 1.5px;
`;

const Caption = styled.div`
  position: relative;
  height: ${p => (p.$mark ? 22 : 20)}px;
  width: 400px;
  padding-left: 100px;
  font: 14px/20px ${CJK};
  letter-spacing: .6px;
  color: #3a3a3a;
  white-space: pre;
`;

const RedMark = styled.span`
  position: absolute;
  left: 146px;
  top: 19px;
  width: 185px;
  height: 5px;
  border-radius: 3px;
  background: #ee0000;
`;

const TitleBlock = styled.div`
  margin: auto 0 0 2px;
  width: 440px;
  height: 56px;
  flex: none;
  display: grid;
  grid-template-columns: 23px 38px 45px 23px 38px 46px 23px 37px 45px 38px 84px;
  grid-template-rows: 38px 18px;
  border: 2px solid #484848;
  border-bottom: 0;
  border-right: 0;
  font-size: 12px;
`;

const TitleMain = styled.div`
  grid-column: span 9;
  display: flex;
  align-items: center;
  justify-content: center;
  font: 18px ${CJK};
  letter-spacing: .5px;
  border-right: 1px solid #888;
  border-bottom: 1px solid #999;
  color: #3f3f3f;
`;

const TitleCell = styled.div`
  display: flex;
  align-items: center;
  justify-content: center;
  overflow: hidden;
  white-space: pre;
  border-right: 1px solid #999;
  border-bottom: ${p => (p.$big ? '1px solid #999' : p.$row ? '1px solid #999' : '0')};
  font-size: ${p => (p.$big ? 15 : p.$num ? 13 : 11)}px;
  color: ${p => (p.$small ? '#666' : '#3f3f3f')};
  letter-spacing: ${p => (p.$num ? 1 : 0)}px;
`;

const Signature = styled.svg`
  width: 100%;
  height: 16px;
  fill: none;
  stroke: #333;
  stroke-width: 1;
`;

const DocScroll = styled.div`
  padding: 158px 0 0 50px;
`;

const DocThumb = styled.div`
  width: 10px;
  height: 20px;
  border-radius: 5px;
  background: #9c9c9c;
`;

const StatusBar = styled.div`
  height: 25px;
  flex: none;
  display: flex;
  align-items: center;
  background: #3a3a3a;
  color: #ccc;
  border-bottom: 1px solid #222;
`;

const PageSize = styled.div`
  width: 167px;
  height: 21px;
  padding-left: 2px;
  border-right: 1px solid #ddd;
  font: 12px/20px ${SERIF};
  letter-spacing: .35px;
  white-space: pre;
`;

const Pager = styled.div`
  margin-left: 473px;
  display: flex;
  align-items: center;
`;

const PageInput = styled.div`
  width: 40px;
  height: 15px;
  margin-left: 5px;
  border-radius: 4px;
  background: #fff;
  color: #333;
  font: 11px/15px "Liberation Sans", sans-serif;
  text-align: center;
`;

const PageTotal = styled.div`
  width: 40px;
  padding-left: 6px;
  font: 11px "Liberation Mono", monospace;
  letter-spacing: -.5px;
  white-space: pre;
`;

const ViewModes = styled.div`
  margin-left: 474px;
  width: 53px;
  height: 21px;
  display: flex;
  align-items: center;
  justify-content: flex-end;
  gap: 3px;
  border-left: 1px solid #bbb;
  border-right: 1px solid #bbb;
`;

const ViewBtn = styled.div`
  width: 23px;
  height: 19px;
  display: flex;
  align-items: center;
  justify-content: center;
  background: ${p => (p.$on ? '#5e5e5e' : 'transparent')};
`;

const ZoomBox = styled.div`
  flex: 1;
  display: flex;
  align-items: center;
  padding: 0 8px 0 10px;
  justify-content: space-between;
`;

const ZoomValue = styled.div`
  margin-right: 7px;
  font: 11px "Liberation Mono", monospace;
  letter-spacing: -.5px;
`;

const Taskbar = styled.div`
  height: 40px;
  flex: none;
  display: flex;
  background: #030a10;
  color: #eee;
`;

const StartBtn = styled.div`
  width: 48px;
  display: flex;
  align-items: center;
  padding-left: 16px;
  background: #000;
`;

const SearchBox = styled.div`
  width: 344px;
  display: flex;
  align-items: center;
  padding-left: 11px;
  background: #333;
`;

const CortanaRing = styled.div`
  width: 20px;
  height: 20px;
  border-radius: 50%;
  border: 3px solid #ddd;
`;

const SearchText = styled.div`
  width: 277px;
  margin-left: 6px;
  color: #8e8e8e;
  font-size: 14px;
`;

const TaskBtn = styled.div`
  width: ${p => p.$w}px;
  flex: none;
  display: flex;
  align-items: center;
  justify-content: center;
  position: relative;
  background: ${p => (p.$active ? '#2c3b40' : 'transparent')};

  &::after {
    content: ${p => (p.$line ? "''" : 'none')};
    position: absolute;
    left: ${p => (p.$active ? 0 : 4)}px;
    right: ${p => (p.$active ? 0 : 4)}px;
    bottom: 0;
    height: 2px;
    background: #7ab8f0;
  }
`;

const BellWrap = styled.div`
  position: relative;
  width: 24px;
  height: 24px;
  display: flex;
  align-items: center;
  justify-content: center;
`;

const BellBadge = styled.div`
  position: absolute;
  right: ${p => (p.$ring ? 0 : -4)}px;
  top: ${p => (p.$ring ? 0 : -6)}px;
  display: flex;
`;

const PdfTile = styled.div`
  width: 25px;
  height: 25px;
  border-radius: 2px;
  border: 1px solid #999;
  background: linear-gradient(#d2701f, #a55515);
  color: #f5d9b8;
  font: bold 9px/23px "Liberation Serif", serif;
  text-align: center;
`;

const TrayLink = styled.div`
  width: 50px;
  flex: none;
  text-align: center;
  color: #bbb;
  font-size: 13px;
  line-height: 40px;
`;

const CpuBox = styled.div`
  width: 64px;
  flex: none;
  display: flex;
  flex-direction: column;
  align-items: center;
  color: #ddd;
  font-size: 12px;
  line-height: 18px;
  padding-top: 2px;
`;

const TrayItem = styled.div`
  width: ${p => p.$w}px;
  flex: none;
  display: flex;
  align-items: center;
  justify-content: center;
  color: #eee;
  font-size: 14px;
`;

const TraySogou = styled.div`
  width: 15px;
  height: 17px;
  border-radius: 3px;
  transform: rotate(-6deg);
  background: #ee4d1c;
  color: #fff;
  font: italic bold 15px/17px "Liberation Sans", sans-serif;
  text-align: center;
`;

const ClockBox = styled.div`
  width: 76px;
  flex: none;
  display: flex;
  flex-direction: column;
  align-items: center;
  color: #ddd;
  font: 13px/18px "Liberation Sans", sans-serif;
  padding-top: 2px;
`;
